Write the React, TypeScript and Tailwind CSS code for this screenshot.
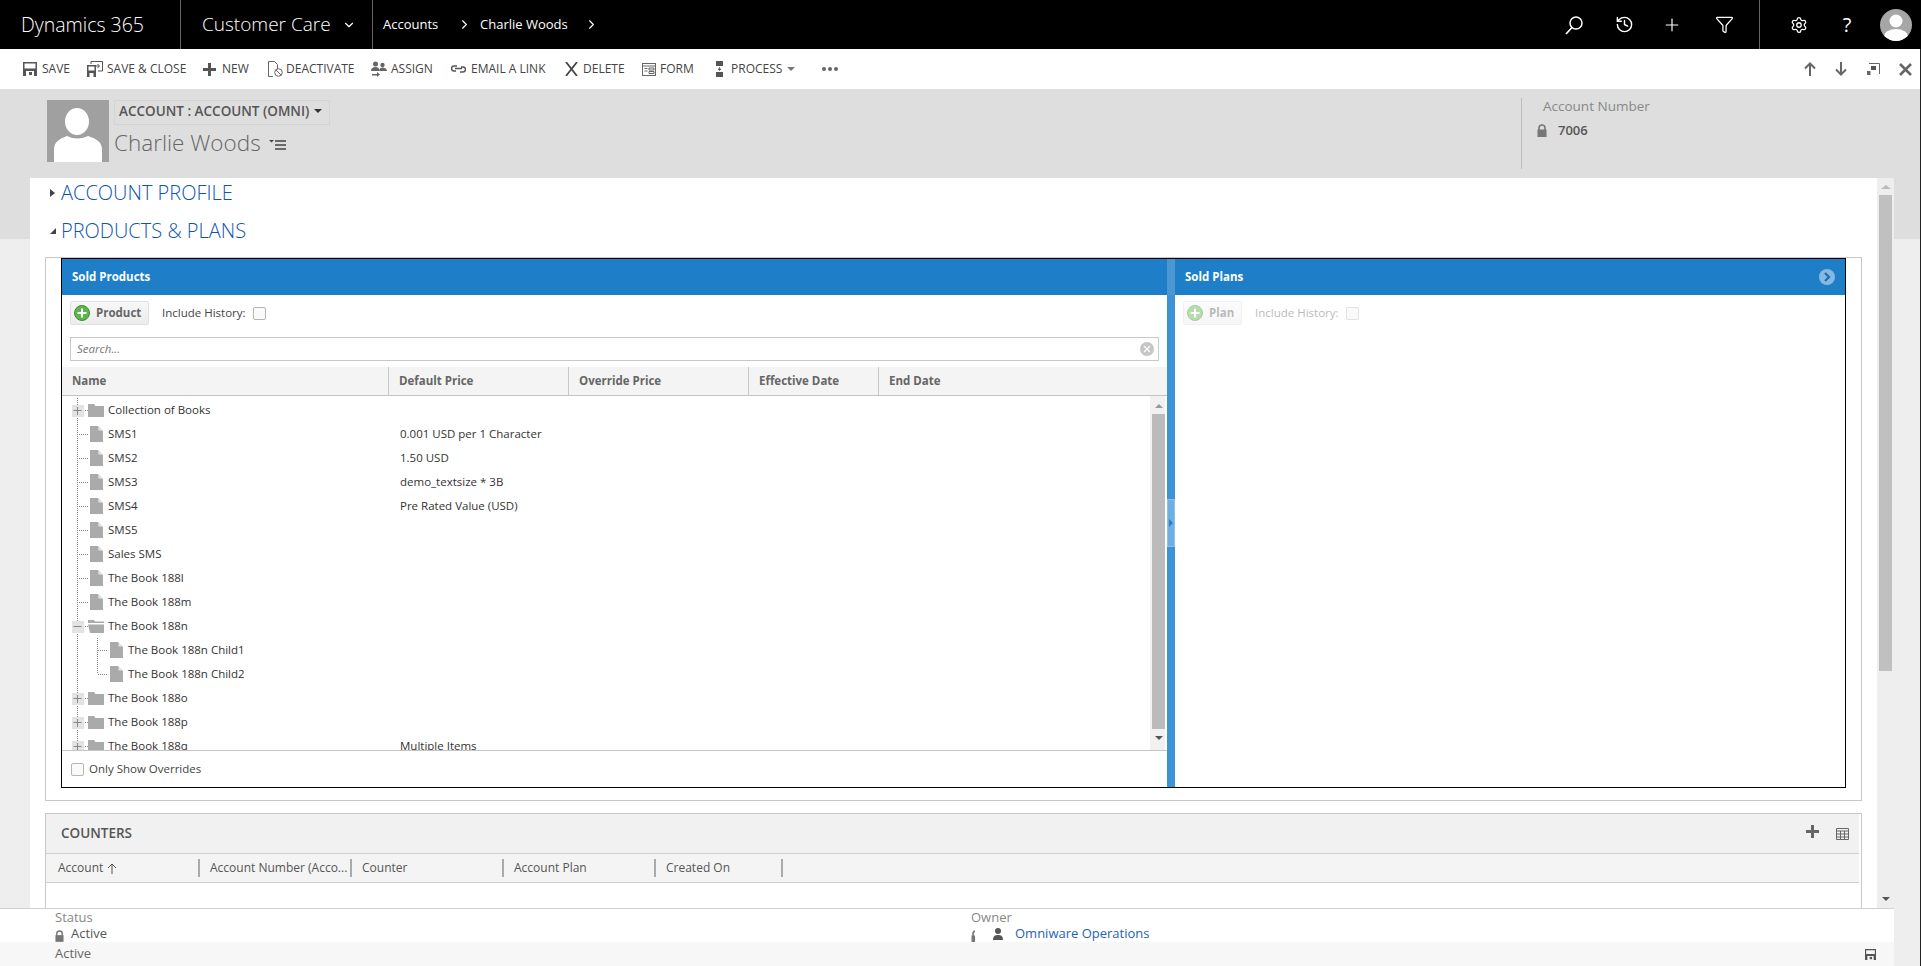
import type { ReactNode } from 'react'
import { ChevronDown, ChevronRight, Funnel, History, Plus, Settings } from 'lucide-react'

function ToolItem({ width, icon, label }: { width: string; icon: ReactNode; label: string }) {
  return (
    <div className={`flex items-center shrink-0 ${width}`}>
      {icon}
      <span className="text-[12px] text-[#444] whitespace-nowrap">{label}</span>
    </div>
  )
}

function LockIcon({ className, viewBox = '0 0 10 13' }: { className: string; viewBox?: string }) {
  return (
    <svg viewBox={viewBox} className={className}>
      <path d="M2 6V4a3 3 0 0 1 6 0v2" fill="none" stroke="#777" strokeWidth="1.6" />
      <rect x="0.5" y="5.5" width="9" height="7.5" fill="#777" />
    </svg>
  )
}

function SaveIcon({ className }: { className: string }) {
  return (
    <svg viewBox="0 0 14 14" className={className}>
      <path fillRule="evenodd" fill="#555" d="M0 0h14v14H0zM1.5 1.5v5h11v-5zM3 9v5h8V9z" />
      <rect x="6" y="10" width="3" height="3" fill="#555" />
    </svg>
  )
}

function Checkbox({ faded }: { faded?: boolean }) {
  return (
    <span
      className={`block w-[13px] h-[13px] rounded-[2px] border shrink-0 bg-[#fafafa] ${faded ? 'border-[#e2e2e2]' : 'border-[#b5b5b5]'}`}
    />
  )
}

function AddButton({ label, width, faded }: { label: string; width: string; faded?: boolean }) {
  return (
    <div
      className={`flex items-center h-[24px] rounded-[2px] border border-[#e0e0e0] bg-gradient-to-b from-[#f8f8f8] to-[#ececec] shrink-0 pl-[3px] ${width} ${faded ? 'opacity-45' : ''}`}
    >
      <svg viewBox="0 0 16 16" className="w-4 h-4 mr-[6px]">
        <circle cx="8" cy="8" r="7.5" fill="#5cb54a" stroke="#3f8f35" />
        <path d="M8 3.5v9M3.5 8h9" stroke="#fff" strokeWidth="2" />
      </svg>
      <span className="text-[11.5px] font-bold text-[#666]">{label}</span>
    </div>
  )
}

function TreeGuide({ kind, depth, last }: { kind: 'closed' | 'open' | 'file'; depth: number; last?: boolean }) {
  return (
    <svg width={depth ? 46 : 26} height="24" className="shrink-0">
      <path d="M15.5 0V24" stroke="#888" strokeDasharray="1 1" />
      {depth === 0 && <path d="M17 12.5H26" stroke="#888" strokeDasharray="1 1" />}
      {depth === 1 && (
        <>
          <path d={last ? 'M35.5 0V12' : 'M35.5 0V24'} stroke="#888" strokeDasharray="1 1" />
          <path d="M36 12.5H45" stroke="#888" strokeDasharray="1 1" />
        </>
      )}
      {kind !== 'file' && (
        <>
          <rect x="10" y="7" width="12" height="12" fill="#e3e3e3" />
          <path d={kind === 'closed' ? 'M11.5 12.5h8M15.5 9v8' : 'M11.5 12.5h8'} stroke="#888" />
        </>
      )}
    </svg>
  )
}

function FolderIcon({ open }: { open: boolean }) {
  return (
    <svg viewBox="0 0 16 13" className="w-4 h-[13px] mr-1 shrink-0">
      {open ? (
        <path d="M0 0h6l1 1.5h9V3H0zM0 4.5h16V13H2z" fill="#aaa" />
      ) : (
        <path d="M0 0h6l1.5 2H16v11H0z" fill="#aaa" />
      )}
    </svg>
  )
}

function FileIcon() {
  return (
    <svg viewBox="0 0 13 16" className="w-[13px] h-4 ml-[2px] mr-[5px] shrink-0">
      <path d="M0 0h8l5 5v11H0z" fill="#aaa" />
      <path d="M8.5 0.5v4h4z" fill="#e6e6e6" />
    </svg>
  )
}

type Row = { name: string; kind: 'closed' | 'open' | 'file'; price?: string; depth?: number; last?: boolean }

const rows: Row[] = [
  { name: 'Collection of Books', kind: 'closed' },
  { name: 'SMS1', kind: 'file', price: '0.001 USD per 1 Character' },
  { name: 'SMS2', kind: 'file', price: '1.50 USD' },
  { name: 'SMS3', kind: 'file', price: 'demo_textsize * 3B' },
  { name: 'SMS4', kind: 'file', price: 'Pre Rated Value (USD)' },
  { name: 'SMS5', kind: 'file' },
  { name: 'Sales SMS', kind: 'file' },
  { name: 'The Book 188l', kind: 'file' },
  { name: 'The Book 188m', kind: 'file' },
  { name: 'The Book 188n', kind: 'open' },
  { name: 'The Book 188n Child1', kind: 'file', depth: 1 },
  { name: 'The Book 188n Child2', kind: 'file', depth: 1, last: true },
  { name: 'The Book 188o', kind: 'closed' },
  { name: 'The Book 188p', kind: 'closed' },
  { name: 'The Book 188q', kind: 'closed', price: 'Multiple Items' },
]

export default function App() {
  return (
    <div className="w-[1921px] h-[966px] overflow-hidden flex flex-col bg-[#eeeeee] font-['Open_Sans',sans-serif] text-[#333]">
      {/* Top nav */}
      <header className="h-[49px] bg-black text-white flex items-center shrink-0">
        <div className="w-[181px] h-full pl-[21px] flex items-center text-[19.5px] font-light border-r border-[#666]">
          Dynamics 365
        </div>
        <div className="w-[192px] h-full pl-[21px] flex items-center text-[19px] font-light border-r border-[#666]">
          Customer Care
          <ChevronDown size={14} className="ml-[11px]" />
        </div>
        <span className="ml-[10px] w-[74px] text-[13px]">Accounts</span>
        <ChevronRight size={15} strokeWidth={1.8} />
        <span className="ml-[8px] w-[104px] text-[13px] whitespace-nowrap">Charlie Woods</span>
        <ChevronRight size={15} strokeWidth={1.8} />
        <div className="ml-auto flex items-center h-full">
          <div className="w-[50px] flex justify-center">
            <svg viewBox="0 0 20 20" className="w-5 h-5">
              <circle cx="12" cy="8" r="6" fill="none" stroke="#fff" strokeWidth="1.5" />
              <path d="M8 12.500L2 19" stroke="#fff" strokeWidth="1.7" />
            </svg>
          </div>
          <div className="w-[50px] flex justify-center">
            <History size={19} strokeWidth={1.8} />
          </div>
          <div className="w-[46px] flex justify-center">
            <Plus size={20} strokeWidth={1.4} />
          </div>
          <div className="w-[58px] flex justify-center">
            <Funnel size={19} strokeWidth={1.6} />
          </div>
          <div className="w-[7px] h-full border-r border-[#666]" />
          <div className="w-[78px] flex justify-center">
            <Settings size={18} strokeWidth={1.7} />
          </div>
          <div className="w-[18px] text-center text-[20px]">?</div>
          <div className="w-[65px] pl-[24px]">
            <svg viewBox="0 0 32 32" className="w-8 h-8">
              <defs>
                <clipPath id="avatar-clip">
                  <circle cx="16" cy="16" r="16" />
                </clipPath>
              </defs>
              <g clipPath="url(#avatar-clip)">
                <rect width="32" height="32" fill="#a6a6a6" />
                <circle cx="16" cy="12" r="6.5" fill="#fff" />
                <ellipse cx="16" cy="28" rx="12" ry="8" fill="#fff" />
              </g>
            </svg>
          </div>
        </div>
      </header>

      <div className="flex-1 min-h-0 flex flex-col border-r border-[#222]">
        {/* Command bar */}
        <div className="h-[40px] bg-white flex items-center pl-[23px] shrink-0">
          <ToolItem
            width="w-[64px]"
            label="SAVE"
            icon={<SaveIcon className="w-[14px] h-[14px] mr-[5px]" />}
          />
          <ToolItem
            width="w-[116px]"
            label="SAVE & CLOSE"
            icon={
              <svg viewBox="0 0 16 16" className="w-4 h-4 mr-1">
                <path fillRule="evenodd" fill="#555" d="M0 4h9v12H0zM1.5 5.5v4h6v-4zM2.5 12v4h4v-4z" />
                <path d="M4 3V0.5h11.5V10H11M8 5h4M10.5 3l2 2-2 2" fill="none" stroke="#555" />
              </svg>
            }
          />
          <ToolItem
            width="w-[65px]"
            label="NEW"
            icon={
              <svg viewBox="0 0 13 13" className="w-[13px] h-[13px] mr-[6px]">
                <path d="M5 0h3v5h5v3H8v5H5V8H0V5h5z" fill="#555" />
              </svg>
            }
          />
          <ToolItem
            width="w-[103px]"
            label="DEACTIVATE"
            icon={
              <svg viewBox="0 0 15 16" className="w-[15px] h-4 mr-[3px]">
                <path d="M.5.5h6l3 3V8M5 15.5H.5V.5" fill="none" stroke="#666" />
                <circle cx="10.5" cy="11.5" r="3.8" fill="none" stroke="#666" />
                <path d="M8 9l5 5" stroke="#666" />
              </svg>
            }
          />
          <ToolItem
            width="w-[80px]"
            label="ASSIGN"
            icon={
              <svg viewBox="0 0 16 16" className="w-4 h-4 mr-1">
                <circle cx="4.5" cy="3" r="2.5" fill="#666" />
                <path d="M0 10c0-3 2-4 4.500-4S8 7 8 8v2z" fill="#666" />
                <circle cx="11.5" cy="4" r="2.200" fill="#666" />
                <path d="M8 10c0-2.500 2-3.500 3.500-3.500S16 7.500 16 10z" fill="#666" />
                <path d="M1 13h5V11l3 2.500L6 16v-1.500H1z" fill="#666" />
              </svg>
            }
          />
          <ToolItem
            width="w-[114px]"
            label="EMAIL A LINK"
            icon={
              <svg viewBox="0 0 15 8" className="w-[15px] h-2 mr-[5px]">
                <path d="M6 1H3a2.500 2.500 0 0 0 0 5h2M9 7h3a2.500 2.500 0 0 0 0-5h-2M4 3.500h7" fill="none" stroke="#555" strokeWidth="1.500" />
              </svg>
            }
          />
          <ToolItem
            width="w-[77px]"
            label="DELETE"
            icon={
              <svg viewBox="0 0 13 14" className="w-[13px] h-[14px] mr-[5px]">
                <path d="M1 0l11 14M12 0L1 14" stroke="#444" strokeWidth="1.800" />
              </svg>
            }
          />
          <ToolItem
            width="w-[74px]"
            label="FORM"
            icon={
              <svg viewBox="0 0 14 13" className="w-[14px] h-[13px] mr-1">
                <rect x="0.500" y="0.500" width="13" height="12" fill="none" stroke="#666" />
                <path d="M1 3h12M2.500 5.500h3M2.500 8h3M7 5h5v2H7zM7 8.500h5v2H7z" fill="none" stroke="#666" />
              </svg>
            }
          />
          <ToolItem
            width="w-[106px]"
            label="PROCESS"
            icon={
              <svg viewBox="0 0 7 16" className="w-[7px] h-4 mr-2">
                <rect width="7" height="5" fill="#555" />
                <rect y="11" width="7" height="5" fill="#555" />
                <path d="M3.500 6v3M2 8h3l-1.500 1.500z" stroke="#555" fill="#555" strokeWidth="0.700" />
              </svg>
            }
          />
          <span className="ml-[-35px] mr-[27px] w-0 h-0 border-x-[4px] border-x-transparent border-t-[4px] border-t-[#777]" />
          <div className="flex gap-[2px]">
            <span className="w-[4px] h-[4px] rounded-full bg-[#666]" />
            <span className="w-[4px] h-[4px] rounded-full bg-[#666]" />
            <span className="w-[4px] h-[4px] rounded-full bg-[#666]" />
          </div>
          <div className="ml-auto flex items-center text-[#666] pr-[8px]">
            <svg viewBox="0 0 12 14" className="w-3 h-[14px] mr-[19px]">
              <path d="M6 14V2M1 6.500L6 1.500l5 5" fill="none" stroke="#666" strokeWidth="2" />
            </svg>
            <svg viewBox="0 0 12 14" className="w-3 h-[14px] mr-[20px]">
              <path d="M6 0v12M1 7.500l5 5 5-5" fill="none" stroke="#666" strokeWidth="2" />
            </svg>
            <svg viewBox="0 0 13 12" className="w-[13px] h-3 mr-[19px]">
              <path d="M2 .5h10.500V11" fill="none" stroke="#666" />
              <rect x="4" y="3" width="5" height="4" fill="#555" />
              <rect y="8" width="3.500" height="4" fill="#666" />
            </svg>
            <svg viewBox="0 0 13 13" className="w-[13px] h-[13px]">
              <path d="M1 1l11 11M12 1L1 12" stroke="#666" strokeWidth="2.600" />
            </svg>
          </div>
        </div>

        {/* Record header */}
        <div className="h-[150px] -mb-[61px] bg-[#dedede] flex items-start pl-[47px] pt-[11px] shrink-0">
          <svg viewBox="0 0 62 62" className="w-[62px] h-[62px] shrink-0">
            <rect width="62" height="62" fill="#a0a0a0" />
            <ellipse cx="30" cy="21.500" rx="12" ry="13.500" fill="#fff" />
            <path d="M7 62V50C7 42 12 39 20 36Q30 41 41 36C50 39 55 42 55 50V62z" fill="#fff" />
          </svg>
          <div className="ml-[5px]">
            <div className="w-[216px] h-[25px] border border-[#d4d4d4] flex items-center pl-[4px] pb-[2px] text-[13.5px] font-semibold text-[#555] whitespace-nowrap">
              ACCOUNT : ACCOUNT (OMNI)
              <span className="ml-[5px] -mt-[2px] w-0 h-0 border-x-[4px] border-x-transparent border-t-[4px] border-t-[#333]" />
            </div>
            <div className="flex items-center mt-[4px]">
              <span className="text-[22.5px] font-light text-[#666] leading-[28px] whitespace-nowrap">Charlie Woods</span>
              <svg viewBox="0 0 17 10" className="w-[17px] h-[10px] ml-[8px] mt-[3px]">
                <path d="M0 0h5L2.500 2.500z" fill="#444" />
                <path d="M6 1h11M6 5h11M6 9h11" stroke="#444" strokeWidth="1.600" />
              </svg>
            </div>
          </div>
          <div className="ml-auto w-[399px] h-[71px] -mt-[2px] border-l border-[#bdbdbd]">
            <div className="pl-[21px] text-[13.5px] leading-[16px] text-[#888]">Account Number</div>
            <div className="flex items-center pl-[15px] mt-[7px]">
              <LockIcon className="w-[10px] h-[13px] mr-[11px]" />
              <span className="text-[13px] font-semibold text-[#555]">7006</span>
            </div>
          </div>
        </div>

        {/* Scrolling form */}
        <div className="flex pl-[30px] h-[730px] shrink-0">
          <div className="w-[1847px] bg-white overflow-hidden shrink-0">
            <div className="h-[30px] flex items-center pl-[20px] text-[#0f55ad] text-[20px] font-light">
              <span className="w-0 h-0 border-y-[4px] border-y-transparent border-l-[5px] border-l-[#444] mr-[6px]" />
              ACCOUNT PROFILE
            </div>
            <div className="h-[30px] mt-[8px] flex items-center pl-[20px] text-[#0f55ad] text-[20px] font-light">
              <span className="w-0 h-0 border-b-[6px] border-b-[#444] border-l-[6px] border-l-transparent mr-[5px]" />
              PRODUCTS &amp; PLANS
            </div>

            <div className="mt-[11px] ml-[15px] w-[1817px] h-[544px] border border-[#c8c8c8]">
              <div className="ml-[15px] w-[1785px] h-[530px] border border-black flex">
                {/* Sold products */}
                <div className="w-[1105px] flex flex-col shrink-0">
                  <div className="h-[36px] bg-[#1e7ec8] flex items-center pl-[10px] text-[11.5px] font-bold text-white shrink-0">
                    Sold Products
                  </div>
                  <div className="h-[42px] flex items-start pt-[6px] pl-[8px] shrink-0">
                    <AddButton label="Product" width="w-[79px]" />
                    <div className="h-[24px] flex items-center">
                      <span className="ml-[13px] text-[11.5px] text-[#444] w-[91px] whitespace-nowrap">Include History:</span>
                      <Checkbox />
                    </div>
                  </div>
                  <div className="mx-[8px] h-[24px] border border-[#c8c8c8] flex items-center pl-[6px] pr-[4px] shrink-0">
                    <span className="text-[11.5px] italic text-[#777]">Search...</span>
                    <svg viewBox="0 0 14 14" className="w-[14px] h-[14px] ml-auto">
                      <circle cx="7" cy="7" r="7" fill="#c6c6c6" />
                      <path d="M4 4l6 6M10 4l-6 6" stroke="#fff" strokeWidth="1.200" />
                    </svg>
                  </div>
                  <div className="mt-[6px] h-[29px] bg-[#f4f4f4] border-b border-[#c4c4c4] flex text-[11.5px] font-bold text-[#666] shrink-0">
                    <div className="w-[327px] pl-[10px] flex items-center border-r border-[#c8c8c8]">Name</div>
                    <div className="w-[180px] pl-[10px] flex items-center border-r border-[#c8c8c8]">Default Price</div>
                    <div className="w-[180px] pl-[10px] flex items-center border-r border-[#c8c8c8]">Override Price</div>
                    <div className="w-[130px] pl-[10px] flex items-center border-r border-[#c8c8c8]">Effective Date</div>
                    <div className="pl-[10px] flex items-center">End Date</div>
                  </div>
                  <div className="flex-1 min-h-0 flex overflow-hidden">
                    <div className="flex-1 pt-[2px]">
                      {rows.map((row) => (
                        <div key={row.name} className="h-[24px] flex items-center text-[11.5px] text-[#333]">
                          <div className="w-[327px] flex items-center shrink-0">
                            <TreeGuide kind={row.kind} depth={row.depth ?? 0} last={row.last} />
                            {row.kind === 'file' ? <FileIcon /> : <FolderIcon open={row.kind === 'open'} />}
                            <span className="whitespace-nowrap">{row.name}</span>
                          </div>
                          <span className="pl-[11px] whitespace-nowrap">{row.price}</span>
                        </div>
                      ))}
                    </div>
                    <div className="w-[15px] mr-[2px] bg-[#f1f1f1] flex flex-col items-end shrink-0">
                      <span className="w-[13px] flex justify-center pt-[8px]">
                        <span className="w-0 h-0 border-x-[4px] border-x-transparent border-b-[4px] border-b-[#999]" />
                      </span>
                      <div className="mt-[6px] w-[13px] h-[315px] bg-[#bbbbbb]" />
                      <span className="w-[13px] flex justify-center pt-[7px]">
                        <span className="w-0 h-0 border-x-[4px] border-x-transparent border-t-[4px] border-t-[#555]" />
                      </span>
                    </div>
                  </div>
                  <div className="h-[37px] border-t border-[#c4c4c4] flex items-center pl-[9px] text-[11.5px] text-[#444] shrink-0">
                    <Checkbox />
                    <span className="ml-[5px]">Only Show Overrides</span>
                  </div>
                </div>

                {/* Splitter */}
                <div className="w-[8px] bg-[#3d94d5] flex flex-col shrink-0">
                  <div className="h-[36px] bg-[#4b97d2]" />
                  <div className="mt-[204px] h-[48px] bg-[#6fb0e2] flex items-center justify-center border border-[#8cc0e8]">
                    <span className="w-0 h-0 border-y-[4px] border-y-transparent border-l-[4px] border-l-[#2f7cc0]" />
                  </div>
                </div>

                {/* Sold plans */}
                <div className="flex-1 flex flex-col">
                  <div className="h-[36px] bg-[#1e7ec8] flex items-center pl-[10px] pr-[10px] text-[11.5px] font-bold text-white shrink-0">
                    Sold Plans
                    <svg viewBox="0 0 16 16" className="w-4 h-4 ml-auto">
                      <circle cx="8" cy="8" r="8" fill="#86b8e2" />
                      <path d="M6 4l4 4-4 4" fill="none" stroke="#1e6fb0" strokeWidth="2.200" />
                    </svg>
                  </div>
                  <div className="h-[42px] flex items-start pt-[6px] pl-[8px] shrink-0">
                    <AddButton label="Plan" width="w-[59px]" faded />
                    <div className="h-[24px] flex items-center">
                      <span className="ml-[13px] text-[11.5px] text-[#bbb] w-[91px] whitespace-nowrap">Include History:</span>
                      <Checkbox faded />
                    </div>
                  </div>
                </div>
              </div>
            </div>

            {/* Counters sub grid */}
            <div className="mt-[12px] ml-[15px] w-[1817px] border-x border-t border-[#c8c8c8] h-[120px]">
              <div className="mr-[2px] h-[40px] bg-[#f1f1f1] border-b border-[#d0d0d0] flex items-center pl-[15px] pr-[10px]">
                <span className="text-[13.5px] font-semibold text-[#555]">COUNTERS</span>
                <svg viewBox="0 0 13 13" className="w-[13px] h-[13px] ml-auto mr-[17px] -mt-[4px]">
                  <path d="M5 0h3v5h5v3H8v5H5V8H0V5h5z" fill="#666" />
                </svg>
                <svg viewBox="0 0 13 12" className="w-[13px] h-3">
                  <path d="M.5.5h12v11H.5zM.5 3h12M.5 6h12M.5 9h12M4.500 3v8.500M8.500 3v8.500" fill="none" stroke="#666" />
                </svg>
              </div>
              <div className="mr-[2px] h-[29px] bg-[#f4f4f4] border-b border-[#d0d0d0] flex items-center text-[12px] text-[#555]">
                <div className="w-[154px] h-[18px] pl-[12px] flex items-center border-r-2 border-[#aaa] whitespace-nowrap">
                  Account
                  <svg viewBox="0 0 10 11" className="w-[10px] h-[11px] ml-[4px]">
                    <path d="M5 11V1M1 5l4-4 4 4" fill="none" stroke="#555" />
                  </svg>
                </div>
                <div className="w-[152px] h-[18px] pl-[10px] flex items-center border-r-2 border-[#aaa] whitespace-nowrap">
                  Account Number (Acco...
                </div>
                <div className="w-[152px] h-[18px] pl-[10px] flex items-center border-r-2 border-[#aaa]">Counter</div>
                <div className="w-[152px] h-[18px] pl-[10px] flex items-center border-r-2 border-[#aaa]">Account Plan</div>
                <div className="w-[127px] h-[18px] pl-[10px] flex items-center border-r-2 border-[#aaa]">Created On</div>
              </div>
            </div>
          </div>

          {/* Form scrollbar */}
          <div className="w-[17px] bg-[#eeeeee] flex flex-col items-center shrink-0">
            <span className="mt-[7px] w-0 h-0 border-x-[5px] border-x-transparent border-b-[4px] border-b-[#bbb]" />
            <div className="mt-[6px] w-[13px] h-[476px] bg-[#c0c0c0]" />
            <span className="mt-[226px] w-0 h-0 border-x-[4px] border-x-transparent border-t-[4px] border-t-[#555]" />
          </div>
        </div>

        {/* Footer */}
        <div className="w-[1894px] h-[34px] bg-white border-t border-[#d0d0d0] overflow-hidden flex shrink-0 text-[13px]">
          <div className="w-[971px] pl-[55px] shrink-0">
            <div className="h-[16px] leading-[16px] text-[#888]">Status</div>
            <div className="flex items-center h-[18px]">
              <LockIcon className="w-[9px] h-[12px] mr-[7px] mt-[3px]" />
              <span className="text-[#555]">Active</span>
            </div>
          </div>
          <div>
            <div className="h-[16px] leading-[16px] text-[#888]">Owner</div>
            <div className="flex items-center h-[18px]">
              <LockIcon viewBox="0 0 4 13" className="w-[4px] h-[13px] mr-[18px] mt-[4px]" />
              <svg viewBox="0 0 10 12" className="w-[10px] h-3 mr-[12px]">
                <circle cx="5" cy="3" r="3" fill="#555" />
                <path d="M0 12c0-4 2-5 5-5s5 1 5 5z" fill="#555" />
              </svg>
              <span className="text-[#1f62b5]">Omniware Operations</span>
            </div>
          </div>
        </div>
        <div className="w-[1894px] h-[24px] bg-[#f7f7f7] flex items-center pl-[55px] pr-[18px] text-[13px] text-[#666] shrink-0">
          Active
          <SaveIcon className="w-[11px] h-[11px] ml-auto" />
        </div>
      </div>
    </div>
  )
}
